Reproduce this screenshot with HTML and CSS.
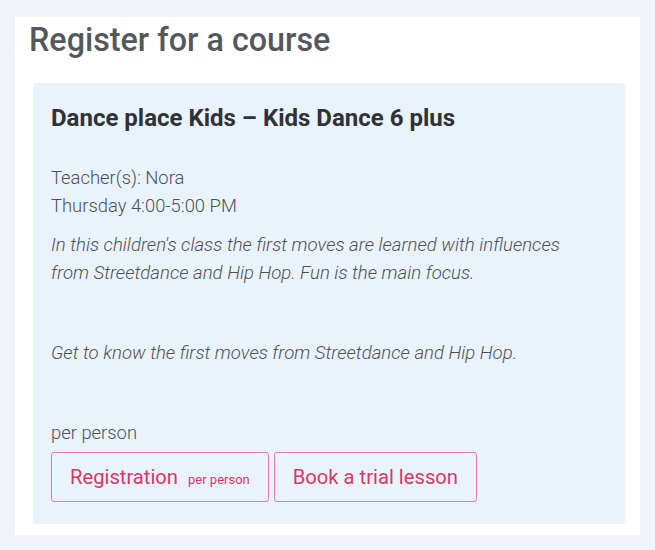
FILE: index.html
```html
<!DOCTYPE html>
<html>
<head>
<meta charset="utf-8">
<link rel="stylesheet" href="styles.css">
</head>
<body>
<div class="card">
  <h1 class="title">Register for a course</h1>
  <div class="course">
    <h2 class="course-name">Dance place Kids – Kids Dance 6 plus</h2>
    <div class="meta">
      <div>Teacher(s): Nora</div>
      <div>Thursday 4:00-5:00 PM</div>
    </div>
    <p class="desc">In this children's class the first moves are learned with influences from Streetdance and Hip Hop. Fun is the main focus.</p>
    <p class="desc second">Get to know the first moves from Streetdance and Hip Hop.</p>
    <div class="price">per person</div>
    <div class="actions">
      <button class="btn">Registration <span class="small">per person</span></button>
      <button class="btn">Book a trial lesson</button>
    </div>
  </div>
</div>
</body>
</html>
```
FILE: styles.css
```css
html, body {
  margin: 0;
  padding: 0;
  background: #f1f3f8;
}
body {
  font-family: Roboto, "Noto Sans", sans-serif;
  padding: 17px 15px 15px 15px;
}
.card {
  background: #ffffff;
  padding: 3px 15px 11px 18px;
  width: 592px;
}
.title {
  margin: 0 0 0 -4px;
  font-size: 32.3px;
  font-weight: 500;
  color: #54585e;
  line-height: 40px;
}
.course {
  margin-top: 23px;
  background: #eaf3fb;
  border-radius: 3px;
  padding: 18px 18px 22px 18px;
  color: #4d5157;
}
.course-name {
  margin: 0;
  font-size: 24px;
  font-weight: 700;
  color: #2f3236;
  line-height: 34px;
}
.meta {
  margin-top: 29px;
  font-size: 18.4px;
  font-weight: 300;
  line-height: 28px;
}
.desc {
  margin: 11px 0 0 0;
  font-size: 18.6px;
  font-weight: 300;
  font-style: italic;
  line-height: 28px;
  max-width: 540px;
}
.desc.second {
  margin-top: 52px;
}
.price {
  margin-top: 52px;
  font-size: 18.4px;
  font-weight: 300;
  line-height: 28px;
}
.actions {
  margin-top: 5px;
  display: flex;
  gap: 5px;
}
.btn {
  font-family: Roboto, "Noto Sans", sans-serif;
  background: transparent;
  border: 1px solid #df7ea2;
  border-radius: 3px;
  color: #d63868;
  font-size: 20.2px;
  font-weight: 400;
  height: 50px;
  padding: 0 18px;
  cursor: pointer;
}
.btn .small {
  font-size: 13px;
  margin-left: 5px;
}
```
